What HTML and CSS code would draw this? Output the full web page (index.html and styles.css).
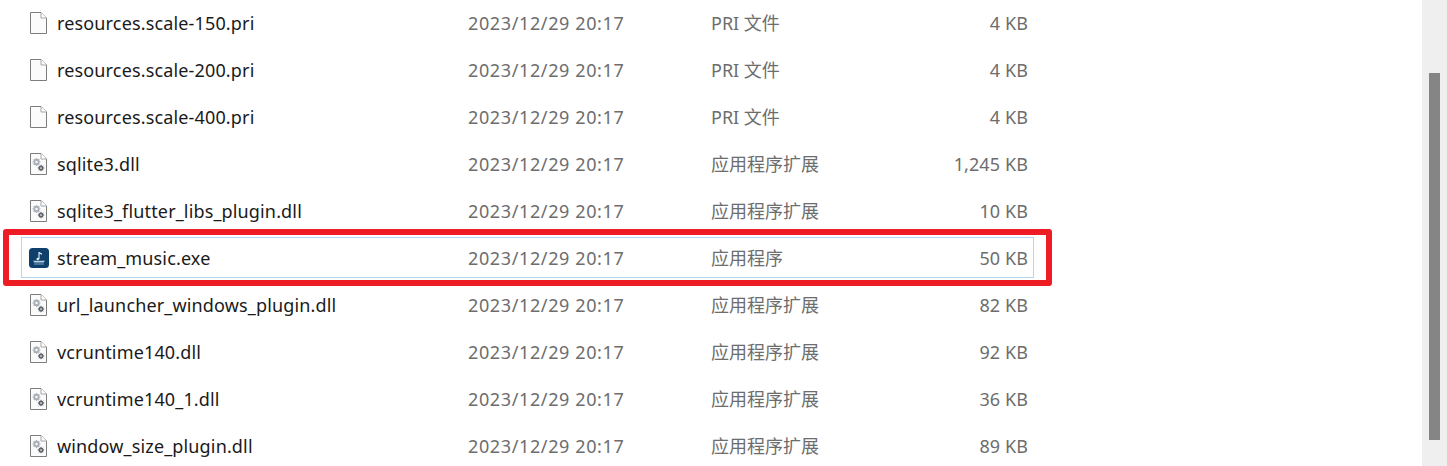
FILE: index.html
```html
<!DOCTYPE html>
<html lang="en">
<head>
    <meta charset="UTF-8">
    <meta name="viewport" content="width=device-width, initial-scale=1.0">
    <title>files</title>
    <link rel="stylesheet" href="styles.css">
</head>
<body>

<svg class="defs" width="0" height="0">
    <symbol id="file-blank" viewBox="0 0 17 22">
        <path d="M.5.5H11L16.5 6V21.5H.5Z" fill="#fbfbfb" stroke="#7d7d7d"/>
        <path d="M11 .5V6H16.5" fill="#fff" stroke="#a5a5a5"/>
    </symbol>
    <symbol id="file-dll" viewBox="0 0 17 22">
        <path d="M.5.5H11L16.5 6V21.5H.5Z" fill="#fbfbfb" stroke="#7d7d7d"/>
        <path d="M11 .5V6H16.5" fill="#fff" stroke="#a5a5a5"/>
        <circle cx="6.5" cy="9" r="2.2" fill="none" stroke="#a9b0b8" stroke-width="2"/>
        <path d="M6.5 5V6M6.5 12V13M2.5 9H3.5M9.5 9H10.5M3.7 6.2L4.4 6.9M8.6 11.1L9.3 11.8M3.7 11.8L4.4 11.1M8.6 6.9L9.3 6.2" stroke="#a9b0b8" stroke-width="1.2"/>
        <circle cx="11" cy="15" r="1.7" fill="none" stroke="#5f646a" stroke-width="1.7"/>
        <path d="M11 11.8V12.8M11 17.2V18.2M7.8 15H8.8M13.2 15H14.2M8.8 12.8L9.4 13.4M12.6 16.6L13.2 17.2M8.8 17.2L9.4 16.6M12.6 13.4L13.2 12.8" stroke="#5f646a"/>
    </symbol>
    <symbol id="file-exe" viewBox="0 0 20 20">
        <rect width="20" height="20" rx="3.5" fill="#0f3f6b"/>
        <path d="M10 4V11" stroke="#e8f0f6" stroke-width="1.1"/>
        <path d="M10 4L13 5.5V6.8L10 5.5Z" fill="#e8f0f6"/>
        <circle cx="8.8" cy="11" r="1.3" fill="#e8f0f6"/>
        <path d="M4 12.8H16L14.6 14.6H5.4Z" fill="#b9cfe2"/>
        <path d="M5 16H15" stroke="#7fa6c6"/>
    </symbol>
</svg>

<div class="filelist">
    <div class="row">
        <svg class="icon"><use href="#file-blank"/></svg>
        <span class="name">resources.scale-150.pri</span>
        <span class="date">2023/12/29 20:17</span>
        <span class="type">PRI 文件</span>
        <span class="size">4 KB</span>
    </div>
    <div class="row">
        <svg class="icon"><use href="#file-blank"/></svg>
        <span class="name">resources.scale-200.pri</span>
        <span class="date">2023/12/29 20:17</span>
        <span class="type">PRI 文件</span>
        <span class="size">4 KB</span>
    </div>
    <div class="row">
        <svg class="icon"><use href="#file-blank"/></svg>
        <span class="name">resources.scale-400.pri</span>
        <span class="date">2023/12/29 20:17</span>
        <span class="type">PRI 文件</span>
        <span class="size">4 KB</span>
    </div>
    <div class="row">
        <svg class="icon"><use href="#file-dll"/></svg>
        <span class="name">sqlite3.dll</span>
        <span class="date">2023/12/29 20:17</span>
        <span class="type">应用程序扩展</span>
        <span class="size">1,245 KB</span>
    </div>
    <div class="row">
        <svg class="icon"><use href="#file-dll"/></svg>
        <span class="name">sqlite3_flutter_libs_plugin.dll</span>
        <span class="date">2023/12/29 20:17</span>
        <span class="type">应用程序扩展</span>
        <span class="size">10 KB</span>
    </div>
    <div class="row row-selected">
        <svg class="icon icon-exe"><use href="#file-exe"/></svg>
        <span class="name">stream_music.exe</span>
        <span class="date">2023/12/29 20:17</span>
        <span class="type">应用程序</span>
        <span class="size">50 KB</span>
    </div>
    <div class="row">
        <svg class="icon"><use href="#file-dll"/></svg>
        <span class="name">url_launcher_windows_plugin.dll</span>
        <span class="date">2023/12/29 20:17</span>
        <span class="type">应用程序扩展</span>
        <span class="size">82 KB</span>
    </div>
    <div class="row">
        <svg class="icon"><use href="#file-dll"/></svg>
        <span class="name">vcruntime140.dll</span>
        <span class="date">2023/12/29 20:17</span>
        <span class="type">应用程序扩展</span>
        <span class="size">92 KB</span>
    </div>
    <div class="row">
        <svg class="icon"><use href="#file-dll"/></svg>
        <span class="name">vcruntime140_1.dll</span>
        <span class="date">2023/12/29 20:17</span>
        <span class="type">应用程序扩展</span>
        <span class="size">36 KB</span>
    </div>
    <div class="row">
        <svg class="icon"><use href="#file-dll"/></svg>
        <span class="name">window_size_plugin.dll</span>
        <span class="date">2023/12/29 20:17</span>
        <span class="type">应用程序扩展</span>
        <span class="size">89 KB</span>
    </div>
</div>

<div class="scrollbar">
    <div class="thumb"></div>
</div>

</body>
</html>
```

FILE: styles.css
```css
html, body {
    height: 466px;
    overflow: hidden;
}
body {
    font-family: "Noto Sans", "Noto Sans CJK SC", sans-serif;
    font-size: 18px;
    background-color: white;
    color: #6d6d6d;
    margin: 0px;
    display: flex;
    justify-content: space-between;
}
.defs {
    position: absolute;
}
.filelist {
    width: 1013px;
    margin-left: 21px;
    margin-top: -1px;
}
.row {
    position: relative;
    display: grid;
    grid-template-columns: 27px 411px 243px 1fr auto;
    align-items: center;
    box-sizing: border-box;
    height: 41px;
    margin: 3px 0px 6px;
    padding: 0px 5px 0px 8px;
    border: 1px solid transparent;
    white-space: nowrap;
}
.row-selected {
    border-color: #b4d8f3;
}
/* red annotation drawn on top of the screenshot */
.row-selected::after {
    content: "";
    position: absolute;
    left: -19px;
    right: -19px;
    top: -9px;
    bottom: -9px;
    border: 6px solid #ee1c25;
    border-radius: 3px;
}
.icon {
    width: 17px;
    height: 22px;
}
.icon-exe {
    width: 20px;
    height: 20px;
    margin-left: -1px;
}
.name {
    color: #1a1a1a;
    letter-spacing: 0.15px;
}
.date {
    letter-spacing: 0.62px;
}
.type {
    margin-bottom: 2px;
}
.size {
    text-align: right;
    letter-spacing: 0.1px;
}
.scrollbar {
    width: 25px;
    height: 466px;
    padding-top: 73px;
    box-sizing: border-box;
    background-color: #efefef;
}
.thumb {
    width: 11px;
    height: 367px;
    margin-left: 7px;
    background-color: #858585;
}
```
